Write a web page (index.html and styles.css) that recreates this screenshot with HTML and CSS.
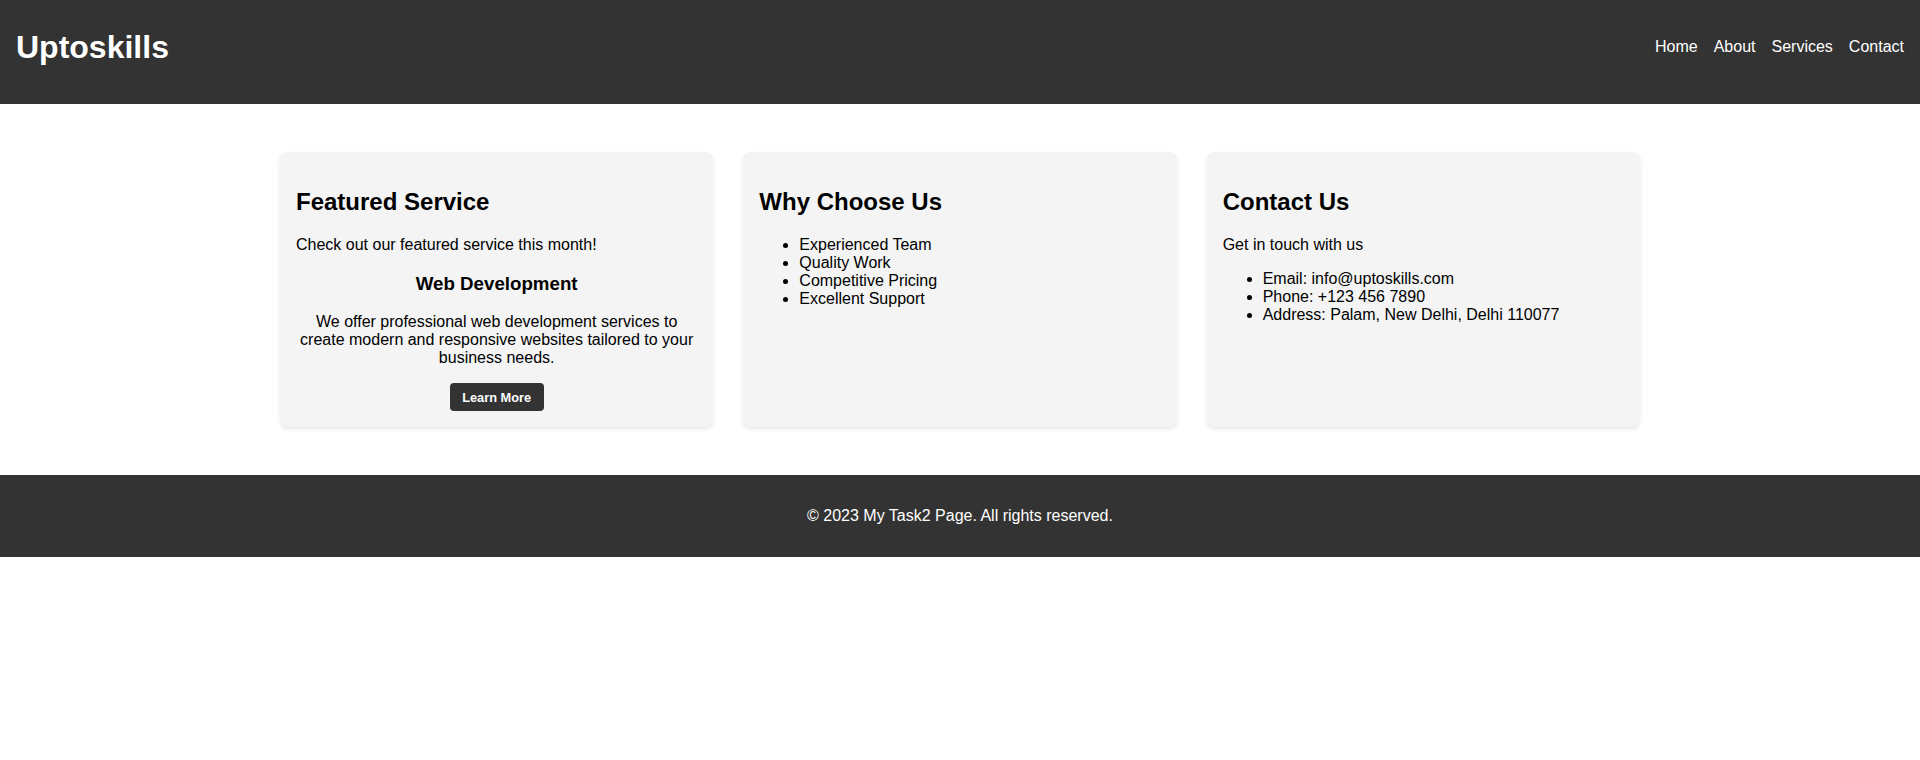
FILE: index.html
```html
<!DOCTYPE html>
<html lang="en">
<head>
<meta charset="UTF-8">
<title>Uptoskills</title>
<link rel="stylesheet" href="styles.css">
</head>
<body>
<header class="site-header">
  <h1 class="logo">Uptoskills</h1>
  <nav class="nav">
    <a href="#">Home</a>
    <a href="#">About</a>
    <a href="#">Services</a>
    <a href="#">Contact</a>
  </nav>
</header>
<main class="main">
  <section class="card">
    <h2>Featured Service</h2>
    <p>Check out our featured service this month!</p>
    <div class="feature">
      <h3>Web Development</h3>
      <p>We offer professional web development services to create modern and responsive websites tailored to your business needs.</p>
      <button class="btn">Learn More</button>
    </div>
  </section>
  <section class="card">
    <h2>Why Choose Us</h2>
    <ul>
      <li>Experienced Team</li>
      <li>Quality Work</li>
      <li>Competitive Pricing</li>
      <li>Excellent Support</li>
    </ul>
  </section>
  <section class="card">
    <h2>Contact Us</h2>
    <p>Get in touch with us</p>
    <ul>
      <li>Email: info@uptoskills.com</li>
      <li>Phone: +123 456 7890</li>
      <li>Address: Palam, New Delhi, Delhi 110077</li>
    </ul>
  </section>
</main>
<footer class="site-footer">
  <p>&copy; 2023 My Task2 Page. All rights reserved.</p>
</footer>
</body>
</html>
```
FILE: styles.css
```css
* { box-sizing: border-box; }
body {
  margin: 0;
  font-family: "Liberation Sans", Arial, sans-serif;
  font-size: 16px;
  color: #000;
  background: #fff;
}
.site-header {
  height: 104px;
  background: #333;
  color: #fff;
  display: flex;
  justify-content: space-between;
  align-items: center;
  padding: 0 16px 10px;
}
.logo {
  margin: 0;
  font-size: 32px;
  font-weight: bold;
}
.nav {
  display: flex;
  gap: 16px;
}
.nav a {
  color: #fff;
  text-decoration: none;
  font-size: 16px;
}
.main {
  max-width: 1400px;
  margin: 0 auto;
  padding: 48px 20px;
  display: flex;
  gap: 30px;
}
.card {
  flex: 1;
  background: #f4f4f4;
  border-radius: 8px;
  padding: 16px;
  box-shadow: 0 2px 4px rgba(0, 0, 0, 0.1);
}
.card h2 {
  font-size: 24px;
  margin: 19.92px 0;
}
.card p { margin: 16px 0; }
.card ul { margin: 16px 0; padding-left: 40px; }
.card > :first-child { margin-top: 19.92px; }
.feature {
  text-align: center;
}
.feature h3 {
  font-size: 18.72px;
  margin: 18.72px 0;
}
.btn {
  font-family: "Liberation Sans", Arial, sans-serif;
  font-size: 12.8px;
  font-weight: bold;
  color: #fff;
  background: #333;
  border: none;
  border-radius: 4px;
  padding: 6.4px 12.6px;
  line-height: normal;
  cursor: pointer;
}
.site-footer {
  background: #333;
  color: #fff;
  text-align: center;
  padding: 16px;
}
.site-footer p { margin: 16px 0; }
```
